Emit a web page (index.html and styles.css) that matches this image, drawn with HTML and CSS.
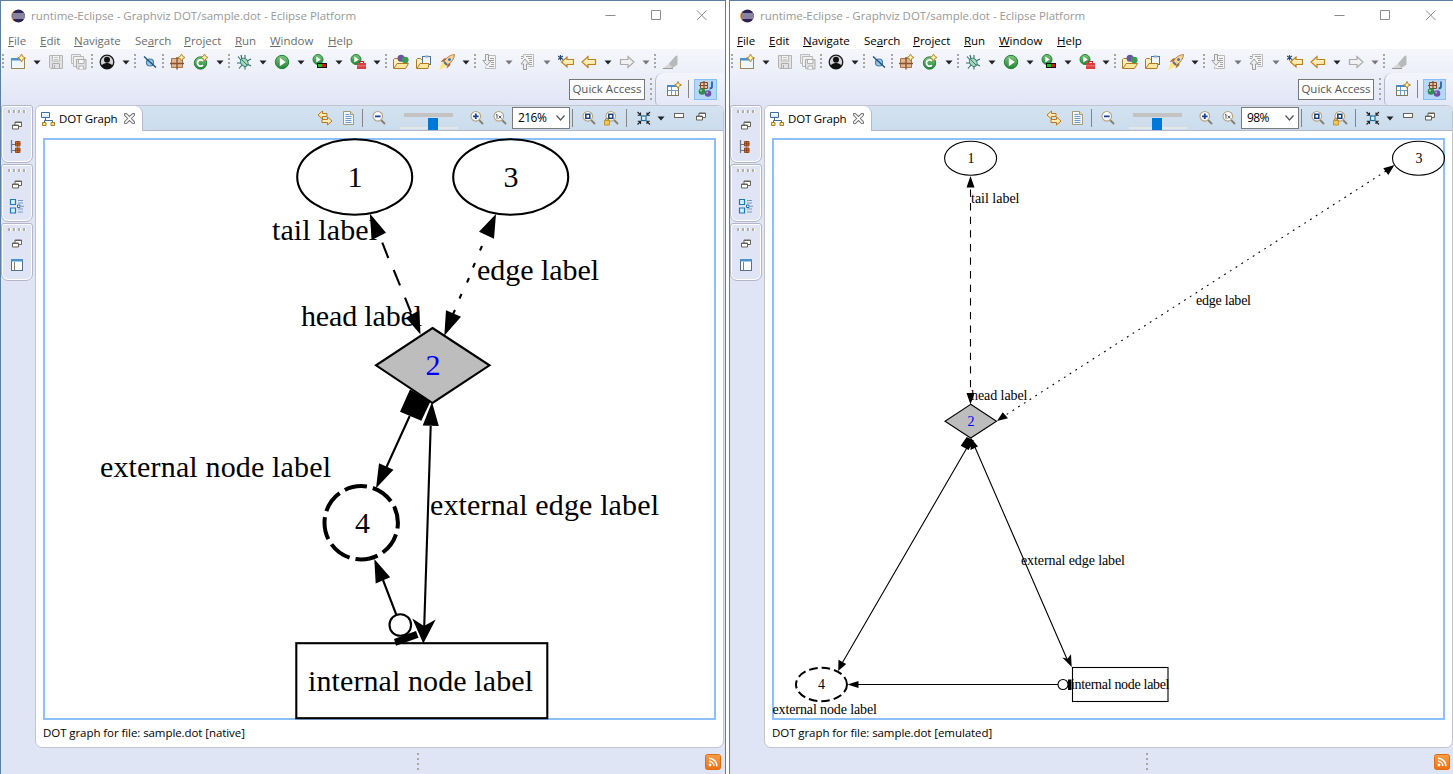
FILE: index.html
```html
<!DOCTYPE html>
<html lang="en">
<head>
<meta charset="utf-8">
<title>runtime-Eclipse - Graphviz DOT/sample.dot - Eclipse Platform</title>
<link rel="stylesheet" href="styles.css">
</head>
<body>
<svg class="sheet" aria-hidden="true">
  <defs>
    <linearGradient id="g-gold" x1="0" y1="0" x2="0" y2="1"><stop offset="0" stop-color="#fffbe0"/><stop offset="1" stop-color="#ffdf86"/></linearGradient>
    <linearGradient id="g-green" x1="0" y1="0" x2="0" y2="1"><stop offset="0" stop-color="#7fc87b"/><stop offset="1" stop-color="#208436"/></linearGradient>
    <linearGradient id="g-rss" x1="0" y1="0" x2="0" y2="1"><stop offset="0" stop-color="#f9a04b"/><stop offset="1" stop-color="#f06f12"/></linearGradient>
    <linearGradient id="g-blue" x1="0" y1="0" x2="0" y2="1"><stop offset="0" stop-color="#fff"/><stop offset="1" stop-color="#cfe4fa"/></linearGradient>
    <symbol id="i-eclipse" viewBox="0 0 14 14"><circle cx="6" cy="7" r="6" fill="#f2a33d"/><circle cx="7.500" cy="7" r="6.500" fill="#2c2255"/><path d="M1.500 5h12M1.200 7h12.700M1.500 9h12" stroke="#e6e4f0" stroke-width="1.100"/></symbol>
    <symbol id="i-new" viewBox="0 0 16 16"><rect x="1.500" y="4.500" width="13" height="10" fill="#eef7fe" stroke="#9c8a55"/><path d="M1 4h10v2.500H1z" fill="#4e93cb"/><path d="M11.500 0l1.300 2.700L15.500 4l-2.700 1.300-1.300 2.700-1.300-2.700L7.500 4l2.700-1.300z" fill="#fff3b5" stroke="#b9862b"/></symbol>
    <symbol id="i-save" viewBox="0 0 16 16"><path d="M1.500 1.500h13v13h-12l-1-1z" fill="#e2e2e2" stroke="#b4b4b4"/><path d="M4.500 2v5h7V2" fill="#f4f4f4" stroke="#b8b8b8"/><path d="M6 3.500h4M6 5.500h4" stroke="#c4c4c4"/><path d="M4.500 14.500v-5h7v5M6.500 11v3" fill="none" stroke="#acacac"/></symbol>
    <symbol id="i-saveall" viewBox="0 0 16 16"><path d="M.5 .5h9v9h-9z" fill="#eee" stroke="#bcbcbc"/><path d="M2.500 2.500h10v10h-10z" fill="#f0f0f0" stroke="#b8b8b8"/><path d="M5.500 5.500h9.500v9.500h-8.500l-1-1z" fill="#e2e2e2" stroke="#adadad"/><path d="M7.500 6v3.500H13V6M8 15v-3h4.500v3" fill="#f6f6f6" stroke="#b2b2b2"/></symbol>
    <symbol id="i-user" viewBox="0 0 16 16"><circle cx="8" cy="8" r="6.800" fill="#d5d5d8" stroke="#1a1a1a" stroke-width="1.300"/><circle cx="8" cy="5.800" r="3" fill="#111"/><path d="M2.300 11.500Q5 8.500 8 9q3-.5 5.700 2.500Q11.500 15 8 15t-5.700-3.500z" fill="#111"/></symbol>
    <symbol id="i-skip" viewBox="0 0 16 16"><circle cx="8" cy="8.500" r="3.500" fill="#9fc8e6" stroke="#3d7fae" stroke-width="1.200"/><path d="M2 2.500l12 11" stroke="#1e4c7a" stroke-width="1.300"/></symbol>
    <symbol id="i-package" viewBox="0 0 16 16"><path d="M1.500 4.500h11v9h-11z" fill="#e0b48f" stroke="#a87247"/><path d="M7 3v12.500M0 9.500h14" stroke="#8b5430" stroke-width="1.400"/><path d="M11.500 0l1.200 2.300L15 3.500l-2.300 1.200L11.500 7l-1.200-2.300L8 3.500l2.300-1.200z" fill="#fff3b5" stroke="#b9862b"/></symbol>
    <symbol id="i-class" viewBox="0 0 16 16"><circle cx="7.500" cy="9" r="6.200" fill="url(#g-green)" stroke="#2b8443"/><path d="M10 6.800A3.200 3.200 0 1 0 10 11.200" fill="none" stroke="#fff" stroke-width="1.800"/><path d="M11.500 0l1.200 2.300L15 3.500l-2.300 1.200L11.500 7l-1.200-2.300L8 3.500l2.300-1.200z" fill="#fff3b5" stroke="#b9862b"/></symbol>
    <symbol id="i-bug" viewBox="0 0 16 16"><path d="M5 6L2 2.500M9 5V1M5 9H1M6 11l-3 3.500M9 12v3.500M11 10l4 2M11 7l4-2M6 5L5 1" stroke="#2c6a66" stroke-width="1.100" fill="none"/><ellipse cx="8.300" cy="8.500" rx="3.500" ry="4.400" transform="rotate(-35 8 8.500)" fill="#a9d6b4" stroke="#2e7d7a"/><path d="M6 6l5 5" stroke="#357f72"/></symbol>
    <symbol id="i-run" viewBox="0 0 16 16"><circle cx="8" cy="8" r="6.700" fill="url(#g-green)" stroke="#22823a"/><path d="M5.800 3.800l6 4.200-6 4.200z" fill="#fff"/></symbol>
    <symbol id="i-coverage" viewBox="0 0 16 16"><circle cx="6" cy="5.500" r="5" fill="url(#g-green)" stroke="#22823a"/><path d="M4.300 2.500l4.500 3-4.500 3z" fill="#fff"/><path d="M5 9h10v5H5z" fill="#111"/><path d="M6 10h4v3H6z" fill="#12c81e"/><path d="M10 10h4v3h-4z" fill="#cf1a22"/></symbol>
    <symbol id="i-external" viewBox="0 0 16 16"><circle cx="6" cy="5.500" r="5" fill="url(#g-green)" stroke="#22823a"/><path d="M4.300 2.500l4.500 3-4.500 3z" fill="#fff"/><path d="M9.500 9V7.500h4V9" fill="none" stroke="#b82c2c" stroke-width="1.200"/><path d="M7 9h9v6H7z" fill="#dc3d3d"/><path d="M7 11.800h9" stroke="#f3b0b0" stroke-width=".6"/></symbol>
    <symbol id="i-opentype" viewBox="0 0 16 16"><path d="M.5 14.500v-9l1-1h3l1 1H12v3" fill="#fff0c0" stroke="#a87a2c"/><circle cx="8" cy="4.200" r="3.500" fill="#6c539f"/><circle cx="12.300" cy="6" r="3.300" fill="#3a9b56"/><path d="M1 14.500l3-5h11.500l-3 5z" fill="#ffe7a0" stroke="#b27a24"/></symbol>
    <symbol id="i-opentask" viewBox="0 0 16 16"><path d="M.5 14.500v-9l1-1h3l1 1H13v3" fill="#fff0c0" stroke="#a87a2c"/><rect x="6.500" y="2.500" width="8" height="8" fill="#eef5fc" stroke="#50749e"/><path d="M9 1.500h3.500v2H9z" fill="#87a6c5"/><path d="M1 14.500l3-5h9l-1 5z" fill="#ffe7a0" stroke="#b27a24"/></symbol>
    <symbol id="i-rocket" viewBox="0 0 16 16"><path d="M0 16l3-8 5 4z" fill="#ffe57f"/><path d="M5 7.500Q9 1 15.500.5 15 7 8.500 11z" fill="#f5d4a0" stroke="#bd8444"/><path d="M5 7.500L1.500 8 5 4.500l2.500-.2zM8.500 11l-1 3.500 3.800-3.200V8.500z" fill="#aa6937"/><circle cx="10.500" cy="5.500" r="1.500" fill="#4d77a5"/><path d="M5 8l3 3" stroke="#5c6f84" stroke-width="2"/></symbol>
    <symbol id="i-next" viewBox="0 0 16 16"><path d="M5.500 5V1.500h8v13h-10v-2" fill="#f4f4f4" stroke="#bbb"/><path d="M8 4.500h4M8 6.500h4M9 8.500h3M9 10.500h3M7 12.500h5" stroke="#a3a3a3"/><path d="M3.500 .5h3v6H9L5 11.500 1 6.500h2.500z" fill="#eee" stroke="#9d9d9d"/></symbol>
    <symbol id="i-prev" viewBox="0 0 16 16"><path d="M3.500 4V.5h10v12h-5" fill="#f4f4f4" stroke="#bbb"/><path d="M1 2.500h2M1 4.500h2M6 2.500h6M8 4.500h4M9 6.500h3M9 8.500h3M9 10.500h3" stroke="#a3a3a3"/><path d="M3.500 15.500h3V10H9L5 5 1 10h2.500z" fill="#eee" stroke="#9d9d9d"/></symbol>
    <symbol id="i-lastedit" viewBox="0 0 16 16"><path d="M9 3v2.500h6.500v5H9V13L3.500 8z" fill="url(#g-gold)" stroke="#bd8220" stroke-width="1.200"/><path d="M2.500 1v5.500M0 2l5 3.500M5 2L0 5.500" stroke="#254b73" stroke-width="1.100"/></symbol>
    <symbol id="i-back" viewBox="0 0 16 16"><path d="M7 2.500v3h7.500v5H7v3L1 8z" fill="url(#g-gold)" stroke="#bd8220" stroke-width="1.200"/></symbol>
    <symbol id="i-forward" viewBox="0 0 16 16"><path d="M9 2.500v3H1.500v5H9v3L15 8z" fill="#f1f1f1" stroke="#aaa" stroke-width="1.200"/></symbol>
    <symbol id="i-pin" viewBox="0 0 16 16"><path d="M0 15l8-6 3 5.500z" fill="#d5d5d5"/><path d="M7 9.500L13.500 2l2-.5v9l-5 3.500z" fill="#b9b9b9"/><path d="M1 14.500h10" stroke="#9a9a9a"/></symbol>
    <symbol id="i-drop" viewBox="0 0 8 5"><path d="M.5.500h7L4 4.500z"/></symbol>
    <symbol id="i-openpersp" viewBox="0 0 16 16"><rect x="1.500" y="4.500" width="11" height="10" fill="#fff" stroke="#7d7b5a"/><path d="M1 4h10v2H1z" fill="#4c8cc4"/><path d="M5.500 6v8M2 9.500h10M9.500 9v5" stroke="#6c9cc8"/><path d="M12 .5l1 2.300L15.500 4 13 5.200 12 7.500l-1-2.300L8.500 4 11 2.800z" fill="#fff3b5" stroke="#b9862b"/></symbol>
    <symbol id="i-java" viewBox="0 0 16 16"><path d="M2.500 1.500h7v6h-7z" fill="#e8c4a2" stroke="#7c4a2c"/><path d="M6 0v8M1 4.500h9" stroke="#7c4a2c" stroke-width="1.200"/><path d="M14 .5v5q0 2-2.500 2" fill="none" stroke="#2a65a0" stroke-width="1.800"/><circle cx="4" cy="10.500" r="3.300" fill="#2f8c4c"/><circle cx="10" cy="12.500" r="3.300" fill="#6a51a3"/><circle cx="3" cy="9.500" r="1" fill="#a5d9ac"/><circle cx="9.200" cy="11.500" r="1" fill="#b8a9da"/></symbol>
    <symbol id="i-restore" viewBox="0 0 10 9"><path d="M3 1h6.500v4.500H3z" fill="#fff" stroke="#696258"/><path d="M3 1.500h6.500" stroke="#696258"/><path d="M.5 4h6v4h-6z" fill="#fff" stroke="#696258"/><path d="M.5 4.500h6" stroke="#696258"/></symbol>
    <symbol id="i-hierarchy" viewBox="0 0 16 16"><path d="M2.500 1v13M2.500 5.500H6M2.500 11.500H6" stroke="#6d7684" stroke-width="1.200"/><path d="M6.500 2.500h4.500V7H6.500zM6.500 9h4.500v4.500H6.500z" fill="#d8742f" stroke="#8f441a" stroke-width=".9"/><path d="M8.700 2v5.500M6 4.800h5.500M8.700 8.500v5.500M6 11.300h5.500" stroke="#7a3a18" stroke-width=".8"/></symbol>
    <symbol id="i-outline" viewBox="0 0 16 16"><path d="M1.500 1.500h5v5h-5zM1.500 10h5v5h-5z" fill="#d5f0fb" stroke="#1c78b8" stroke-width="1.200"/><path d="M8.500 7h2.500v2.500H8.500z" fill="#fff" stroke="#236fae"/><path d="M9 2.500h5M9 5h5M12 8.300h3M9 11h5M9 14h5" stroke="#7698bd"/></symbol>
    <symbol id="i-props" viewBox="0 0 16 16"><rect x="2.500" y="2.500" width="11" height="11" fill="#fff" stroke="#56728b"/><path d="M2 2h12v2.500H2z" fill="#4b91cb"/><path d="M5.500 5v8" stroke="#867f5f"/></symbol>
    <symbol id="i-dot" viewBox="0 0 16 16"><path d="M.5 1.500h8v5h-8z" fill="url(#g-blue)" stroke="#426b9e"/><path d="M4.500 7v2.500M3.500 12V9.500h8V12" fill="none" stroke="#426b9e"/><path d="M1.500 11.500H5v3H1.500zM10 11.500h3.500v3H10z" fill="#fbe38b" stroke="#a67d20"/></symbol>
    <symbol id="i-close" viewBox="0 0 12 12"><path d="M.5.800l2-.3L6 3.800 9.500.500l2 .3-.2 2L8 6l3.300 3.300.2 2-2 .2L6 8.200 2.500 11.500l-2-.2.2-2L4 6 .7 2.700z" fill="#fff" stroke="#777" stroke-width="1.100"/></symbol>
    <symbol id="i-link" viewBox="0 0 16 16"><path d="M5.500 1v2.500H10v3H5.500V9L1 5z" fill="url(#g-gold)" stroke="#b97818"/><path d="M10.500 7v2.500H5v3h5.500V15L15 11z" fill="url(#g-gold)" stroke="#b97818"/></symbol>
    <symbol id="i-doc" viewBox="0 0 16 16"><path d="M2.500 1.500h7l3 3v10h-10z" fill="#f3f8fe" stroke="#a39b78"/><path d="M9.500 1.500v3h3" fill="#f1e2a5" stroke="#a39b78"/><path d="M4.500 4.500h4M4.500 6.500h6M4.500 8.500h6M4.500 10.500h6M4.500 12.500h6" stroke="#6f98cc"/></symbol>
    <symbol id="i-lens" viewBox="0 0 16 16"><path d="M10 10l4 4" stroke="#857d74" stroke-width="1.800"/><circle cx="6.800" cy="6.300" r="4.800" fill="#f9fcff" stroke="#b4a178" stroke-width="1.100"/></symbol>
    <symbol id="i-zoomout" viewBox="0 0 16 16"><use href="#i-lens"/><path d="M4 6.300h5.600" stroke="#1d3f9a" stroke-width="1.800"/></symbol>
    <symbol id="i-zoomin" viewBox="0 0 16 16"><use href="#i-lens"/><path d="M4 6.300h5.600M6.800 3.500v5.600" stroke="#1d3f9a" stroke-width="1.800"/></symbol>
    <symbol id="i-zoom1" viewBox="0 0 16 16"><use href="#i-lens"/><path d="M4 5l1-.7v4.400M6.700 5.700l2.700 2.800M9.400 5.700l-2.700 2.800" fill="none" stroke="#444" stroke-width=".9"/></symbol>
    <symbol id="i-zoomfit" viewBox="0 0 16 16"><use href="#i-lens"/><rect x="4.800" y="4.300" width="4" height="4" fill="#fff" stroke="#163d7a" stroke-width="1.500"/></symbol>
    <symbol id="i-zoomlock" viewBox="0 0 16 16"><use href="#i-zoomfit"/><path d="M1.500 10.500V9q1.500-2 3 0v1.500" fill="none" stroke="#a97d25"/><path d="M.5 10.500h5V15h-5z" fill="#f2c84e" stroke="#b98620" stroke-width=".8"/></symbol>
    <symbol id="i-layout" viewBox="0 0 16 16"><rect x="5.500" y="6" width="4.500" height="4.500" fill="#dff3ff" stroke="#1a6b9e" stroke-width="1.200"/><path d="M1.500 2l3 3M14 2l-3 3M1.500 14.500l3-3M14 14.500l-3-3M4.500 2.500v2.800H1.700M11 2.500v2.800h2.800M4.500 14v-2.700H1.700M11 14v-2.700h2.800" fill="none" stroke="#222" stroke-width="1.100"/></symbol>
    <symbol id="i-rss" viewBox="0 0 16 16"><rect x=".5" y=".5" width="15" height="15" rx="2" fill="url(#g-rss)" stroke="#e06c12"/><circle cx="5" cy="11" r="1.400" fill="#fff"/><path d="M4 7.200a5 5 0 0 1 4.900 4.900M4 4.300a8 8 0 0 1 7.900 7.900" fill="none" stroke="#fff" stroke-width="1.500"/></symbol>
  </defs>
</svg>

<div class="desktop">
  <section class="window inactive">
    <header class="titlebar">
      <svg class="logo"><use href="#i-eclipse"/></svg>
      <span class="title">runtime-Eclipse - Graphviz DOT/sample.dot - Eclipse Platform</span>
      <svg class="controls" viewBox="0 0 102 12"><path d="M.5 6.500h10M46.500 1.500h9v9h-9zM92 1.500l9.500 9.500M101.500 1.500L92 11"/></svg>
    </header>
    <nav class="menubar">
      <span class="m-file"><u>F</u>ile</span><span class="m-edit"><u>E</u>dit</span><span class="m-nav"><u>N</u>avigate</span><span class="m-search">Se<u>a</u>rch</span><span class="m-project"><u>P</u>roject</span><span class="m-run"><u>R</u>un</span><span class="m-window"><u>W</u>indow</span><span class="m-help"><u>H</u>elp</span>
    </nav>
    <div class="toolarea">
      <div class="toolbar">
        <i class="grip"></i><svg class="icon"><use href="#i-new"/></svg><svg class="drop"><use href="#i-drop"/></svg><svg class="icon"><use href="#i-save"/></svg><svg class="icon"><use href="#i-saveall"/></svg>
        <i class="grip"></i><svg class="icon"><use href="#i-user"/></svg><svg class="drop"><use href="#i-drop"/></svg>
        <i class="grip"></i><svg class="icon"><use href="#i-skip"/></svg>
        <i class="grip"></i><svg class="icon"><use href="#i-package"/></svg><svg class="icon"><use href="#i-class"/></svg><svg class="drop"><use href="#i-drop"/></svg>
        <i class="grip"></i><svg class="icon"><use href="#i-bug"/></svg><svg class="drop"><use href="#i-drop"/></svg><svg class="icon"><use href="#i-run"/></svg><svg class="drop"><use href="#i-drop"/></svg><svg class="icon"><use href="#i-coverage"/></svg><svg class="drop"><use href="#i-drop"/></svg><svg class="icon"><use href="#i-external"/></svg><svg class="drop"><use href="#i-drop"/></svg>
        <i class="grip"></i><svg class="icon"><use href="#i-opentype"/></svg><svg class="icon"><use href="#i-opentask"/></svg><svg class="icon"><use href="#i-rocket"/></svg><svg class="drop"><use href="#i-drop"/></svg>
        <i class="grip"></i><svg class="icon"><use href="#i-next"/></svg><svg class="drop off"><use href="#i-drop"/></svg><svg class="icon"><use href="#i-prev"/></svg><svg class="drop off"><use href="#i-drop"/></svg><svg class="icon"><use href="#i-lastedit"/></svg><svg class="icon"><use href="#i-back"/></svg><svg class="drop"><use href="#i-drop"/></svg><svg class="icon"><use href="#i-forward"/></svg><svg class="drop off"><use href="#i-drop"/></svg>
        <i class="grip"></i><svg class="icon"><use href="#i-pin"/></svg>
      </div>
      <div class="perspectives">
        <div class="quick">Quick Access</div>
        <i class="grip tall"></i>
        <div class="switcher"><svg class="icon"><use href="#i-openpersp"/></svg><i class="rule"></i><span class="selected"><svg class="icon"><use href="#i-java"/></svg></span></div>
      </div>
    </div>
    <main class="workbench">
      <aside class="trims">
        <div class="trim"><i class="hgrip"></i><svg class="restore"><use href="#i-restore"/></svg><svg class="icon"><use href="#i-hierarchy"/></svg></div>
        <div class="trim"><i class="hgrip"></i><svg class="restore"><use href="#i-restore"/></svg><svg class="icon"><use href="#i-outline"/></svg></div>
        <div class="trim"><i class="hgrip"></i><svg class="restore"><use href="#i-restore"/></svg><svg class="icon"><use href="#i-props"/></svg></div>
      </aside>
      <div class="view">
        <div class="tabs">
          <div class="tab"><svg class="icon"><use href="#i-dot"/></svg><span class="tabname">DOT Graph</span><svg class="close"><use href="#i-close"/></svg></div>
          <div class="viewbar">
            <svg class="icon"><use href="#i-link"/></svg><svg class="icon doc"><use href="#i-doc"/></svg><i class="rule"></i><svg class="icon zout"><use href="#i-zoomout"/></svg>
            <svg class="slider" viewBox="0 0 58 24"><path class="track" d="M4 7h49v4H4z"/><path class="ticks" d="M0 21h58v2H0z"/><path class="thumb" d="M28 12h10v12H28z"/></svg>
            <svg class="icon zin"><use href="#i-zoomin"/></svg><svg class="icon z1"><use href="#i-zoom1"/></svg>
            <div class="combo"><span class="pct">216%</span><svg viewBox="0 0 9 6"><path d="M.5.500l4 4.500 4-4.500"/></svg></div>
            <i class="rule"></i><svg class="icon fit"><use href="#i-zoomfit"/></svg><svg class="icon lock"><use href="#i-zoomlock"/></svg><i class="rule"></i><svg class="icon lay"><use href="#i-layout"/></svg><svg class="drop"><use href="#i-drop"/></svg><i class="minimize"></i><svg class="restore"><use href="#i-restore"/></svg>
          </div>
        </div>
        <div class="pane">
          <svg class="graph big" viewBox="43 138 673 582">
            <rect class="focus" x="44" y="139" width="671" height="580"/>
            <g class="shape">
              <ellipse cx="354.700" cy="177" rx="57.500" ry="37.800"/><ellipse cx="510.700" cy="177" rx="57.500" ry="37.800"/>
              <path class="grey" d="M432.500 328L489.500 365.300 432.500 403 376 365.300z"/>
              <circle class="bold" cx="361.200" cy="522.800" r="36.700" pathLength="360" stroke-dasharray="35.500 9.500" stroke-dashoffset="-18.500"/>
              <rect x="296.300" y="643.200" width="251" height="75"/>
              <path d="M382.300 242.700l6 15.300M393.700 270l6.300 15.300M405 297.700l6 15"/>
              <path d="M482 246l-2 4.500M475 263l-2 4.500M469 278l-2 4.500M461.500 294l-2 4.500M455 310l-2 4"/>
              <path d="M409.700 416L386.500 467M430.700 426L424.200 627M383 580L396.200 614.500"/>
              <circle cx="400.300" cy="625" r="10.800"/>
            </g>
            <g class="heads">
              <path d="M369.800 213.500L371.700 240 386 232.700zM420.500 334.500L406 317.700 419.300 310.300zM496 214L479 231.700 494 238.700zM444.300 335.700L446 310.300 461 316.700z"/>
              <path d="M410 389.500L400 411.700 421.300 420.700 430.700 401zM376 488.300L379 463.300 393.500 469.700zM432 402L422.700 425.500 438.800 426zM423.300 643.500L412.300 618.500 424 626 435.700 619.500zM374.300 559L375.700 583.500 390.200 577.300zM394 639L416 631 418.500 637.700 396 645.700z"/>
            </g>
            <g class="labels">
              <text x="347.500" y="187">1</text><text x="503.500" y="187">3</text><text class="blue" x="425.500" y="375">2</text><text x="355" y="533">4</text>
              <text x="272" y="240" textLength="105">tail label</text><text x="301" y="325.500" textLength="121">head label</text><text x="477" y="280" textLength="122">edge label</text>
              <text x="100" y="476.700" textLength="231">external node label</text><text x="430" y="515" textLength="229">external edge label</text><text x="308" y="691" textLength="225">internal node label</text>
            </g>
          </svg>
          <div class="caption">DOT graph for file: sample.dot [native]</div>
        </div>
      </div>
    </main>
    <footer class="statusbar"><i class="grip tall"></i><svg class="rss"><use href="#i-rss"/></svg></footer>
  </section>

  <section class="window active">
    <header class="titlebar">
      <svg class="logo"><use href="#i-eclipse"/></svg>
      <span class="title">runtime-Eclipse - Graphviz DOT/sample.dot - Eclipse Platform</span>
      <svg class="controls" viewBox="0 0 102 12"><path d="M.5 6.500h10M46.500 1.500h9v9h-9zM92 1.500l9.500 9.500M101.500 1.500L92 11"/></svg>
    </header>
    <nav class="menubar">
      <span class="m-file"><u>F</u>ile</span><span class="m-edit"><u>E</u>dit</span><span class="m-nav"><u>N</u>avigate</span><span class="m-search">Se<u>a</u>rch</span><span class="m-project"><u>P</u>roject</span><span class="m-run"><u>R</u>un</span><span class="m-window"><u>W</u>indow</span><span class="m-help"><u>H</u>elp</span>
    </nav>
    <div class="toolarea">
      <div class="toolbar">
        <i class="grip"></i><svg class="icon"><use href="#i-new"/></svg><svg class="drop"><use href="#i-drop"/></svg><svg class="icon"><use href="#i-save"/></svg><svg class="icon"><use href="#i-saveall"/></svg>
        <i class="grip"></i><svg class="icon"><use href="#i-user"/></svg><svg class="drop"><use href="#i-drop"/></svg>
        <i class="grip"></i><svg class="icon"><use href="#i-skip"/></svg>
        <i class="grip"></i><svg class="icon"><use href="#i-package"/></svg><svg class="icon"><use href="#i-class"/></svg><svg class="drop"><use href="#i-drop"/></svg>
        <i class="grip"></i><svg class="icon"><use href="#i-bug"/></svg><svg class="drop"><use href="#i-drop"/></svg><svg class="icon"><use href="#i-run"/></svg><svg class="drop"><use href="#i-drop"/></svg><svg class="icon"><use href="#i-coverage"/></svg><svg class="drop"><use href="#i-drop"/></svg><svg class="icon"><use href="#i-external"/></svg><svg class="drop"><use href="#i-drop"/></svg>
        <i class="grip"></i><svg class="icon"><use href="#i-opentype"/></svg><svg class="icon"><use href="#i-opentask"/></svg><svg class="icon"><use href="#i-rocket"/></svg><svg class="drop"><use href="#i-drop"/></svg>
        <i class="grip"></i><svg class="icon"><use href="#i-next"/></svg><svg class="drop off"><use href="#i-drop"/></svg><svg class="icon"><use href="#i-prev"/></svg><svg class="drop off"><use href="#i-drop"/></svg><svg class="icon"><use href="#i-lastedit"/></svg><svg class="icon"><use href="#i-back"/></svg><svg class="drop"><use href="#i-drop"/></svg><svg class="icon"><use href="#i-forward"/></svg><svg class="drop off"><use href="#i-drop"/></svg>
        <i class="grip"></i><svg class="icon"><use href="#i-pin"/></svg>
      </div>
      <div class="perspectives">
        <div class="quick">Quick Access</div>
        <i class="grip tall"></i>
        <div class="switcher"><svg class="icon"><use href="#i-openpersp"/></svg><i class="rule"></i><span class="selected"><svg class="icon"><use href="#i-java"/></svg></span></div>
      </div>
    </div>
    <main class="workbench">
      <aside class="trims">
        <div class="trim"><i class="hgrip"></i><svg class="restore"><use href="#i-restore"/></svg><svg class="icon"><use href="#i-hierarchy"/></svg></div>
        <div class="trim"><i class="hgrip"></i><svg class="restore"><use href="#i-restore"/></svg><svg class="icon"><use href="#i-outline"/></svg></div>
        <div class="trim"><i class="hgrip"></i><svg class="restore"><use href="#i-restore"/></svg><svg class="icon"><use href="#i-props"/></svg></div>
      </aside>
      <div class="view">
        <div class="tabs">
          <div class="tab"><svg class="icon"><use href="#i-dot"/></svg><span class="tabname">DOT Graph</span><svg class="close"><use href="#i-close"/></svg></div>
          <div class="viewbar">
            <svg class="icon"><use href="#i-link"/></svg><svg class="icon doc"><use href="#i-doc"/></svg><i class="rule"></i><svg class="icon zout"><use href="#i-zoomout"/></svg>
            <svg class="slider" viewBox="0 0 58 24"><path class="track" d="M4 7h49v4H4z"/><path class="ticks" d="M0 21h58v2H0z"/><path class="thumb" d="M23 12h10v12H23z"/></svg>
            <svg class="icon zin"><use href="#i-zoomin"/></svg><svg class="icon z1"><use href="#i-zoom1"/></svg>
            <div class="combo"><span class="pct">98%</span><svg viewBox="0 0 9 6"><path d="M.5.500l4 4.500 4-4.500"/></svg></div>
            <i class="rule"></i><svg class="icon fit"><use href="#i-zoomfit"/></svg><svg class="icon lock"><use href="#i-zoomlock"/></svg><i class="rule"></i><svg class="icon lay"><use href="#i-layout"/></svg><svg class="drop"><use href="#i-drop"/></svg><i class="minimize"></i><svg class="restore"><use href="#i-restore"/></svg>
          </div>
        </div>
        <div class="pane">
          <svg class="graph small" viewBox="772 138 673 582">
            <rect class="focus" x="773" y="139" width="671" height="580"/>
            <g class="shape">
              <ellipse cx="970.600" cy="158.300" rx="26" ry="17"/><ellipse cx="1418.500" cy="158.300" rx="26" ry="17"/>
              <path class="grey" d="M970.700 404.300L996.500 421.300 970.700 438 945 421.300z"/>
              <ellipse class="bold" cx="821.500" cy="684.500" rx="25.500" ry="16.700" stroke-dasharray="8.500 4"/>
              <rect x="1072.500" y="667.500" width="95.500" height="34"/>
              <path d="M970.500 189.500V394" stroke-dasharray="7.300 6.300"/>
              <path d="M1386 171L1005 415.500" stroke-dasharray="1.800 5"/>
              <path d="M968 446L842.500 662.500M974 445L1067 659M858 684.500h200"/>
              <circle cx="1063" cy="684.500" r="5"/>
            </g>
            <g class="heads">
              <path d="M970.500 176l4 11.500h-8zM970.500 404.500l4-11.500h-8zM1394.500 165L1383.300 168.300 1388.300 175zM997 421L1002.700 412.300 1008 418.300z"/>
              <path d="M966.700 437L960.700 445.700 968.500 450 974 440.500zM971 438L970.500 450 978 446.500zM838.200 671L838.500 659.800 846.200 664zM1071.700 667L1062.300 657.500 1067.500 658.800 1071 654.300zM847.500 684.500L858.500 681v7zM1068 679.500h3.500v10.500H1068z"/>
            </g>
            <g class="labels">
              <text x="967.500" y="163">1</text><text x="1415.500" y="163">3</text><text class="blue" x="967.500" y="426">2</text><text x="818" y="689">4</text>
              <text x="971" y="203" textLength="48.500">tail label</text><text x="971" y="400" textLength="56.500">head label</text><text x="1196" y="305" textLength="55">edge label</text>
              <text x="1021" y="565" textLength="104">external edge label</text><text x="772.500" y="714" textLength="104.500">external node label</text><text x="1071" y="689" textLength="98.500">internal node label</text>
            </g>
          </svg>
          <div class="caption">DOT graph for file: sample.dot [emulated]</div>
        </div>
      </div>
    </main>
    <footer class="statusbar"><i class="grip tall"></i><svg class="rss"><use href="#i-rss"/></svg></footer>
  </section>
</div>
</body>
</html>
```

FILE: styles.css
```css
* { box-sizing: border-box; }
body { margin: 0; overflow: hidden; background: #fff; font: 11.5px/16px "Open Sans", "Noto Sans", sans-serif; color: #000; }
.sheet { position: absolute; width: 0; height: 0; }
svg { display: block; flex: none; }
.desktop { display: flex; gap: 3px; width: 1455px; height: 774px; }
.window { flex: none; display: flex; flex-direction: column; width: 726px; height: 774px; border: 1px solid #5d80a2; border-bottom: 0; background: #e0e5f5; }

.titlebar { display: flex; align-items: center; height: 31px; padding: 1px 18px 3px 10px; background: #fff; }
.logo { width: 14px; height: 14px; }
.title { margin-left: 6px; color: #999; white-space: nowrap; letter-spacing: -.035px; }
.controls { width: 102px; height: 12px; margin: 0 0 1px auto; fill: none; stroke: #8b8b8b; }

.menubar { display: flex; gap: 14px; height: 17px; padding: 1px 0 0 7px; background: #fff; letter-spacing: -.03px; }
.menubar span { flex: none; white-space: nowrap; }
.menubar u { text-underline-offset: 1px; }
.inactive .menubar { color: #6d6d6d; }
.m-file { width: 18px; } .m-edit { width: 20px; } .m-nav { width: 47px; } .m-search { width: 35px; }
.m-project { width: 37px; } .m-run { width: 21px; } .m-window { width: 44px; } .m-help { width: 25px; }

.toolarea { height: 56px; background: linear-gradient(#f6f7fc, #e0e5f6); }
.toolbar { display: flex; align-items: center; gap: 7px; height: 24px; padding: 2px 0 0 4px; }
.icon { width: 16px; height: 16px; overflow: visible; }
.drop { width: 8px; height: 5px; fill: #222; }
.drop.off { fill: #777; }
.grip { flex: none; width: 2px; height: 16px; margin: 0 -1px 0 -3px; background: repeating-linear-gradient(#aaa69e 0 2px, transparent 2px 4px); }
.perspectives { display: flex; align-items: center; justify-content: flex-end; height: 32px; padding-right: 1px; }
.quick { width: 76px; height: 21px; border: 1px solid #777; background: #fff; color: #555; text-align: center; white-space: nowrap; line-height: 18px; }
.grip.tall { height: 22px; margin: 0 3px 0 5px; background: repeating-linear-gradient(#aaa69e 0 2px, transparent 2px 5px); }
.switcher { display: flex; align-items: center; width: 69px; height: 32px; padding-left: 10px; border-left: 1px solid #b5b8c8; border-radius: 8px 0 0 4px; background: linear-gradient(#f4f5fc, #e4e8f7); }
.rule { flex: none; width: 1px; height: 18px; background: #858585; }
.switcher .rule { margin: 0 5px 0 6px; }
.selected { display: grid; place-items: center; width: 23px; height: 21px; border: 1px solid #86bff8; background: #b6d8f6; }

.workbench { display: flex; height: 643px; }
.trims { width: 34px; display: flex; flex-direction: column; gap: 1px; }
.trim { display: flex; flex-direction: column; align-items: center; width: 32px; height: 58px; padding-top: 4px; border: 1px solid #b4b6c8; border-radius: 3px 3px 7px 7px; box-shadow: inset 0 0 0 1px #fff; }
.hgrip { width: 18px; height: 3px; background: repeating-linear-gradient(90deg, #b4b0a8 0 2px, #fff 2px 3px, transparent 3px 5px); }
.restore { width: 10px; height: 9px; }
.trim .restore { margin: 8px 0 9px; }

.view { display: flex; flex-direction: column; width: 689px; height: 643px; border: 1px solid #c3c5ce; border-radius: 6px 7px 7px 7px; background: #fff; overflow: hidden; }
.tabs { display: flex; height: 25px; background: linear-gradient(#d3e2f0, #cbdcec); }
.tab { display: flex; align-items: center; width: 107px; padding-left: 5px; background: #fff; border-right: 1px solid #b5b8cc; border-radius: 5px 8px 0 0; }
.tabname { width: 58px; margin-left: 2px; white-space: nowrap; letter-spacing: -.2px; }
.close { width: 11px; height: 11px; margin-left: 7px; }
.viewbar { flex: 1; display: flex; align-items: center; height: 25px; padding-left: 174px; border-bottom: 1px solid #b5b8cc; }
.doc { margin: 0 5px 0 8px; }
.zout { margin-left: 8px; }
.slider { width: 58px; height: 24px; margin-left: 13px; }
.track { fill: #c3c3c3; } .ticks { fill: #e6e6e6; } .thumb { fill: #0078d7; }
.zin { margin-left: 11px; }
.z1 { margin: 0 4px 0 7px; }
.combo { display: flex; align-items: center; width: 58px; height: 22px; margin-right: 2px; padding: 0 4px 0 5px; border: 1px solid #7a7a7a; background: #fff; }
.combo svg { width: 9px; height: 6px; margin-left: auto; fill: none; stroke: #555; stroke-width: 1.200; }
.pct { font-size: 12px; letter-spacing: -.55px; }
.fit { margin: 0 7px 0 8px; }
.lock { margin-right: 6px; }
.lay { margin: 0 5px 0 9px; }
.minimize { width: 10px; height: 5px; margin: 0 12px 5px 9px; border: 1px solid #696258; background: #fff; }
.viewbar .restore { margin-bottom: 3px; }
.pane { flex: 1; padding: 7px 7px 0; }
.graph { width: 673px; height: 582px; overflow: visible; }
.caption { margin-top: 5px; white-space: nowrap; letter-spacing: -.075px; }

.focus { fill: #fff; stroke: #8dc1fc; stroke-width: 2; }
.shape { fill: none; stroke: #000; }
.shape .grey { fill: #bdbdbd; }
.heads { fill: #000; }
.labels { font-family: "Liberation Serif", "Times New Roman", serif; }
.labels .blue { fill: #00f; }
.big .shape { stroke-width: 2.100; } .big .shape .bold { stroke-width: 4; } .big .labels { font-size: 30px; }
.small .shape { stroke-width: 1.100; } .small .shape .bold { stroke-width: 2; } .small .labels { font-size: 14px; }

.statusbar { display: flex; align-items: center; height: 26px; padding-left: 411px; }
.statusbar .grip.tall { height: 17px; }
.rss { width: 16px; height: 16px; margin: 1px 0 0 283px; }
```
